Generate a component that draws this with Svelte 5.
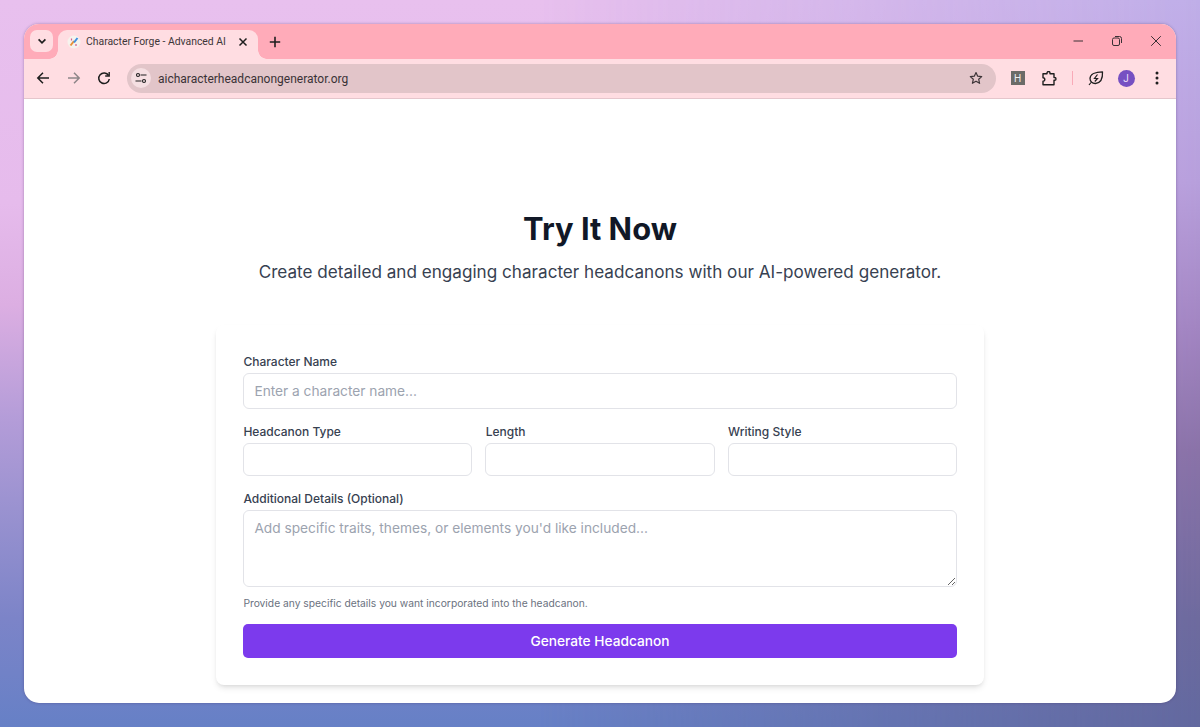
<script>
  const selects = ['Headcanon Type', 'Length', 'Writing Style'];
</script>

<div class="desktop">
  <div class="window">
    <div class="tabstrip">
      <button class="tabsearch" aria-label="Search tabs">
        <svg width="12" height="12" viewBox="0 0 12 12"><path d="M2.6 4.4 6 7.8l3.4-3.4" fill="none" stroke="#1f1f1f" stroke-width="1.7"/></svg>
      </button>
      <div class="tab">
        <svg class="favicon" width="14" height="14" viewBox="0 0 14 14">
          <circle cx="7" cy="7" r="6.5" fill="#f6f3ee"/>
          <path d="M3.5 10.5 7 6" stroke="#e8913a" stroke-width="2"/>
          <path d="M7 7.5 10.5 3" stroke="#3d8fe0" stroke-width="2"/>
          <path d="M4.5 5.5v-2M9 11V9" stroke="#d65a8e" stroke-width="1.2"/>
        </svg>
        <span class="tabtitle">Character Forge - Advanced AI</span>
        <svg class="tabclose" width="10" height="10" viewBox="0 0 10 10"><path d="M1.5 1.5l7 7m0-7-7 7" stroke="#1f1f1f" stroke-width="1.5"/></svg>
      </div>
      <svg class="newtab" width="12" height="12" viewBox="0 0 12 12"><path d="M6 .8v10.4M.8 6h10.4" stroke="#1f1f1f" stroke-width="1.6"/></svg>
      <div class="winctl">
        <svg width="12" height="12" viewBox="0 0 12 12"><path d="M1.5 6h9.500" stroke="#3a3035" stroke-width="1"/></svg>
        <svg width="12" height="12" viewBox="0 0 12 12" fill="none" stroke="#3a3035" stroke-width="1"><rect x="1.500" y="3" width="7" height="7.500" rx="1.500"/><path d="M4 1.500h4.500A2 2 0 0 1 10.500 3.500V8"/></svg>
        <svg width="12" height="12" viewBox="0 0 12 12"><path d="M1.200 1.200l9.600 9.600m0-9.600-9.600 9.600" stroke="#3a3035" stroke-width="1"/></svg>
      </div>
    </div>

    <div class="toolbar">
      <svg class="nav" width="14" height="14" viewBox="0 0 14 14" fill="none" stroke="#1f1f1f" stroke-width="1.500"><path d="M13 7H2M7 1.800 1.800 7 7 12.200"/></svg>
      <svg class="nav" width="14" height="14" viewBox="0 0 14 14" fill="none" stroke="#8f8689" stroke-width="1.500"><path d="M1 7h11M7 1.800 12.200 7 7 12.200"/></svg>
      <svg class="nav" width="14" height="14" viewBox="0 0 14 14" fill="none" stroke="#1f1f1f" stroke-width="1.500"><path d="M11.600 4.500A5.300 5.300 0 1 0 12.300 8"/><path d="M12.200 1v4H8.200" stroke-width="1.400"/></svg>
      <div class="omnibox">
        <span class="sitechip">
          <svg width="12" height="12" viewBox="0 0 12 12" fill="none" stroke="#1f1f1f" stroke-width="1.100"><circle cx="3" cy="3" r="1.500"/><path d="M5.500 3H11.500M.5 9h6"/><circle cx="9" cy="9" r="1.500"/></svg>
        </span>
        <span class="url">aicharacterheadcanongenerator.org</span>
        <svg class="star" width="14" height="14" viewBox="0 0 14 14"><path d="M7 1.500 8.700 5.200l4 .4-3 2.700.900 4L7 10.200 3.400 12.300l.9-4-3-2.700 4-.4z" fill="none" stroke="#3d3538" stroke-width="1.200" stroke-linejoin="round"/></svg>
      </div>
      <div class="actions">
        <span class="hbadge">H</span>
        <svg class="puzzle" width="15" height="15" viewBox="0 0 15 15" fill="none" stroke="#1f1f1f" stroke-width="1.400"><path d="M1 2.700H5V2a1.500 1.500 0 0 1 3 0v.7h4V6.500h.6a1.400 1.400 0 0 1 0 2.800H12v4.500H1V10.300a1.800 1.800 0 0 0 0-3.600z" stroke-linejoin="round"/></svg>
        <span class="divider"></span>
        <svg width="16" height="16" viewBox="0 0 16 16" fill="none" stroke="#1f1f1f" stroke-width="1.300"><path d="M14.500 1.800c.3 5.500-.6 11-7 11.700-3 .2-5.500-2-5.500-5 0-4.500 5.500-6.700 12.500-6.700z" stroke-linejoin="round"/><path d="M1 15l2-2.500M9.500 4.500 6.500 8.500H9.500L6.800 11.500" stroke-width="1.200"/></svg>
        <span class="avatar">J</span>
        <svg width="4" height="14" viewBox="0 0 4 14" fill="#1f1f1f"><circle cx="2" cy="2" r="1.500"/><circle cx="2" cy="7" r="1.500"/><circle cx="2" cy="12" r="1.500"/></svg>
      </div>
    </div>

    <main class="page">
      <h1>Try It Now</h1>
      <p class="lead">Create detailed and engaging character headcanons with our AI-powered generator.</p>
      <form class="card" onsubmit={(e) => e.preventDefault()}>
        <div class="field">
          <label for="name">Character Name</label>
          <input id="name" type="text" placeholder="Enter a character name..." />
        </div>
        <div class="row">
          {#each selects as s, i}
            <div class="cell">
              <label for={'sel' + i}>{s}</label>
              <div id={'sel' + i} class="select"></div>
            </div>
          {/each}
        </div>
        <div class="details">
          <label for="details">Additional Details (Optional)</label>
          <textarea id="details" placeholder="Add specific traits, themes, or elements you'd like included..."></textarea>
          <p class="help">Provide any specific details you want incorporated into the headcanon.</p>
        </div>
        <button class="generate" type="submit">Generate Headcanon</button>
      </form>
    </main>
  </div>
</div>

<style>
  :global(body) { margin: 0; }
  :global(*) { box-sizing: border-box; }
  .desktop {
    position: relative;
    width: 1200px;
    height: 727px;
    padding: 24px;
    overflow: hidden;
    background: linear-gradient(180deg, #e8c0ee 0%, #e6bbec 28%, #dcaee2 42%, #b39cd8 58%, #9a92d0 70%, #7c84c8 85%, #6680c6 100%);
    font-family: Inter, "Liberation Sans", sans-serif;
  }
  .desktop::before {
    content: '';
    position: absolute;
    inset: 0;
    background: linear-gradient(180deg, #bfaee8 0%, #b79fdc 25%, #a285c2 45%, #8a72a8 62%, #6e6a9e 85%, #62689f 100%);
    -webkit-mask-image: linear-gradient(90deg, transparent 45%, #000 100%);
    mask-image: linear-gradient(90deg, transparent 45%, #000 100%);
  }
  .window {
    position: relative;
    width: 1152px;
    height: 679px;
    border-radius: 15px;
    overflow: hidden;
    background: #fff;
    display: flex;
    flex-direction: column;
    box-shadow: 0 0 3px rgba(60,40,90,.4);
  }
  .tabstrip {
    height: 35px;
    flex: none;
    background: #ffabb9;
    display: flex;
    align-items: flex-start;
    padding: 6px 0 0 6px;
  }
  .tabsearch {
    width: 23px;
    height: 22px;
    border: 0;
    padding: 0;
    border-radius: 7px;
    background: #ffdde2;
    display: flex;
    align-items: center;
    justify-content: center;
  }
  .tab {
    position: relative;
    width: 200px;
    height: 29px;
    margin-left: 5px;
    background: #ffdde2;
    border-radius: 9px 9px 0 0;
    display: flex;
    align-items: center;
    padding: 0 9px 6px;
    gap: 5px;
  }
  .tab::before, .tab::after {
    content: '';
    position: absolute;
    bottom: 0;
    width: 9px;
    height: 9px;
  }
  .tab::before {
    left: -9px;
    background: radial-gradient(circle at 0 0, transparent 8.500px, #ffdde2 9px);
  }
  .tab::after {
    right: -9px;
    background: radial-gradient(circle at 100% 0, transparent 8.500px, #ffdde2 9px);
  }
  .favicon { flex: none; }
  .tabtitle {
    flex: 1;
    min-width: 0;
    font: 10.400px "Roboto", "Liberation Sans", sans-serif;
    color: #3d3538;
    white-space: nowrap;
    overflow: hidden;
  }
  .tabclose { flex: none; margin-left: 4px; margin-right: 1px; }
  .newtab { margin: 6px 0 0 11px; }
  .winctl {
    margin-left: auto;
    display: flex;
    gap: 27px;
    padding: 5px 14px 0 0;
  }
  .toolbar {
    position: relative;
    height: 40px;
    flex: none;
    background: #ffdde2;
    border-bottom: 1px solid #e5c6cc;
    display: flex;
    align-items: center;
    padding: 0 8px 1px 12px;
  }
  .nav { margin-right: 16.500px; flex: none; }
  .omnibox {
    width: 869px;
    height: 29px;
    margin-left: -1px;
    border-radius: 15px;
    background: #e2c5c9;
    display: flex;
    align-items: center;
    padding: 0 13px 0 4px;
  }
  .sitechip {
    width: 20px;
    height: 20px;
    border-radius: 50%;
    background: #f5dfe2;
    display: flex;
    align-items: center;
    justify-content: center;
  }
  .url {
    margin-left: 7.500px;
    padding-top: 1px;
    flex: 1;
    font: 12px "Roboto", "Liberation Sans", sans-serif;
    color: #3a3236;
  }
  .actions {
    margin-left: 15px;
    display: flex;
    align-items: center;
    flex: 1;
  }
  .hbadge {
    width: 14px;
    height: 14px;
    background: #6b6b68;
    color: #eee;
    font: 10px "Liberation Sans", sans-serif;
    display: flex;
    align-items: center;
    justify-content: center;
    margin-right: 17px;
  }
  .divider {
    width: 1px;
    height: 14px;
    background: #f9aab8;
    margin: 0 15px;
  }
  .avatar {
    width: 17px;
    height: 17px;
    border-radius: 50%;
    background: #7650c2;
    color: #e9def8;
    font: 10px "Roboto", sans-serif;
    display: flex;
    align-items: center;
    justify-content: center;
    margin: 0 20px 0 14px;
  }
  .page {
    flex: 1;
    padding-top: 112px;
    display: flex;
    flex-direction: column;
    align-items: center;
    color: #111827;
    min-height: 0;
  }
  h1 {
    margin: 0;
    font-size: 30.860px;
    font-weight: 700;
    line-height: 36px;
    color: #111827;
  }
  .lead {
    margin: 12.500px 0 0;
    font-size: 17.140px;
    line-height: 24px;
    color: #374151;
  }
  .card {
    width: 768px;
    margin-top: 41.500px;
    padding: 28px 27px 27px;
    background: #fff;
    border-radius: 8px;
    box-shadow: 0 4px 6px -1px rgba(0,0,0,.1), 0 2px 4px -2px rgba(0,0,0,.1);
    display: flex;
    flex-direction: column;
  }
  label {
    display: block;
    font-size: 12px;
    font-weight: 500;
    line-height: 16px;
    color: #374151;
    padding: 1px 0 0 .4px;
    margin-bottom: 3px;
  }
  input, textarea, .select {
    display: block;
    width: 100%;
    border: 1px solid #e2e3e8;
    border-radius: 6px;
    background: #fff;
    font: 13.710px Inter, sans-serif;
    color: #111827;
    outline: 0;
  }
  input::placeholder, textarea::placeholder { color: #9ca3af; opacity: 1; }
  input { height: 36px; padding: 0 10.400px; }
  .row {
    margin-top: 14px;
    display: grid;
    grid-template-columns: repeat(3, 1fr);
    gap: 13px;
  }
  .select { height: 33px; }
  .details { margin-top: 14px; }
  textarea {
    height: 77px;
    padding: 9px 10.400px;
    resize: vertical;
  }
  .help {
    margin: 9px 0 0;
    padding-left: .4px;
    font-size: 10.280px;
    line-height: 14px;
    color: #6b7280;
  }
  .generate {
    margin-top: 14px;
    height: 34px;
    border: 0;
    border-radius: 5px;
    background: #7c3aed;
    color: #fff;
    font: 500 13.710px Inter, sans-serif;
  }
</style>
